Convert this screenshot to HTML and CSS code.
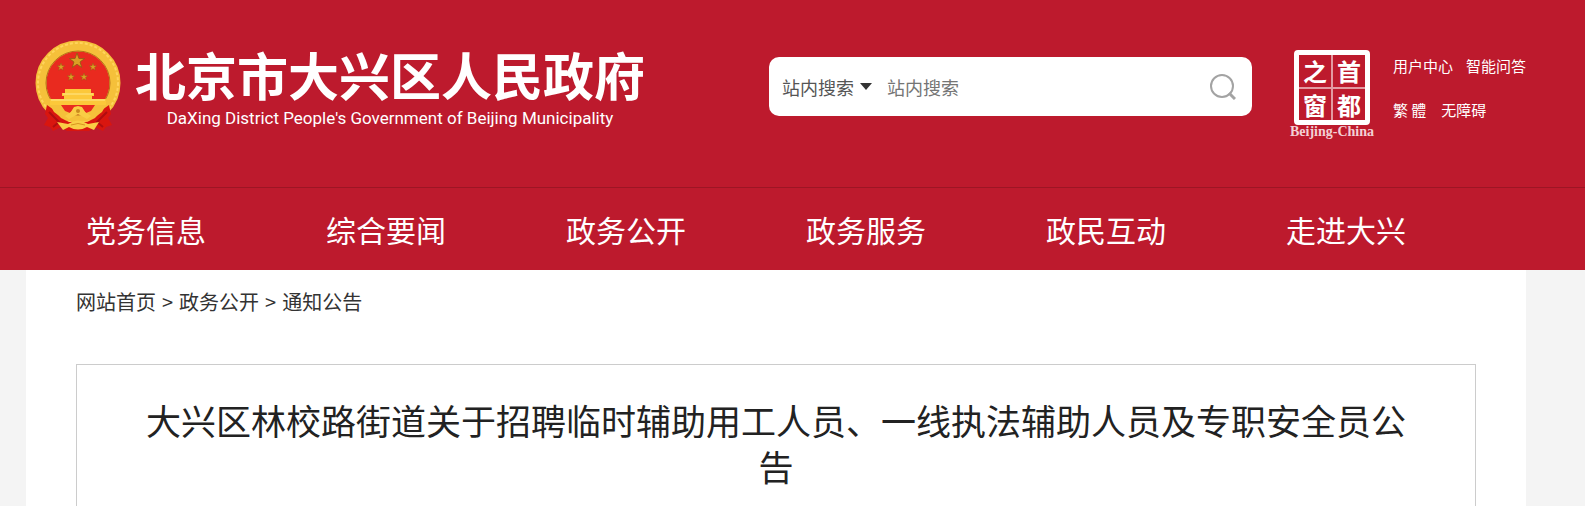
FILE: index.html
```html
<!DOCTYPE html>
<html lang="zh-CN">
<head>
    <meta charset="UTF-8">
    <meta name="viewport" content="width=device-width, initial-scale=1.0">
    <title>大兴区林校路街道关于招聘临时辅助用工人员、一线执法辅助人员及专职安全员公告</title>
    <link rel="stylesheet" href="styles.css">
</head>
<body>

<header class="header">
    <div class="wrap top">
        <a class="logo" href="#">
            <svg class="emblem" viewBox="0 0 86 92" aria-hidden="true">
                <defs>
                    <path id="star" d="M0-10 2.4-3.1 9.5-3.1 3.8 1.2 5.9 8.1 0 4-5.9 8.1-3.8 1.2-9.5-3.1-2.4-3.1z"/>
                </defs>
                <!-- wheat ring -->
                <circle cx="43" cy="43" r="37" fill="#e92a1f" stroke="#f5c03a" stroke-width="11"/>
                <circle cx="43" cy="43" r="40" fill="none" stroke="#ffd45c" stroke-width="2" stroke-dasharray="3 2"/>
                <circle cx="43" cy="43" r="32" fill="none" stroke="#b4701a" stroke-width="1"/>
                <!-- ribbons -->
                <path d="M12 65 19 70 26 78 34 82H52L60 78 67 70 74 65 76 74 73 78 77 85 71 87 68 91 60 87 54 91H32L26 87 18 91 15 87 9 85 13 78 10 74z" fill="#d9160f"/>
                <path d="M14 72 24 82 18 87M72 72 62 82 68 87" fill="none" stroke="#b00d10" stroke-width="2"/>
                <path d="M15 65H71L67 72 59 78 50 76 43 70 36 76 27 78 19 72z" fill="#f5c03a"/>
                <path d="M26 65H60L56 71 51 73 47 68H39L35 73 30 71z" fill="#e92a1f"/>
                <path d="M36 72 39 67 43 66 47 67 50 72 56 76 52 79 43 74 34 79 30 76z" fill="#f9cd45"/>
                <circle cx="43" cy="71" r="2" fill="#c98a1e"/>
                <!-- gate -->
                <path d="M30 49H56V53H59V56H57V59H71V65H15V59H29V56H27V53H30z" fill="#fcc83a"/>
                <path d="M28 54H58M16 60H70" stroke="#ffe78a" stroke-width="1"/>
                <path d="M22 82 33 84Q43 77 53 84L64 82 59 90 52 87Q43 92 34 87L28 90z" fill="#f9cd45"/>
                <path d="M36 85Q43 82 50 85" fill="none" stroke="#d9951f" stroke-width="1"/>
                <g fill="#dba024" stroke="#8f5a14" stroke-width="1">
                    <use href="#star" transform="translate(42 21) scale(.8)"/>
                    <use href="#star" transform="translate(26 27) scale(.4)"/>
                    <use href="#star" transform="translate(58 27) scale(.4)"/>
                    <use href="#star" transform="translate(36 37) scale(.4)"/>
                    <use href="#star" transform="translate(49 37) scale(.4)"/>
                </g>
            </svg>
            <span class="logo-text">
                <strong class="logo-cn">北京市大兴区人民政府</strong>
                <span class="logo-en">DaXing District People's Government of Beijing Municipality</span>
            </span>
        </a>

        <form class="search" action="#">
            <select class="search-type" aria-label="搜索范围">
                <option>站内搜索</option>
            </select>
            <svg class="caret" viewBox="0 0 12 7" aria-hidden="true"><path d="M0 0H12L6 7z" fill="#333"/></svg>
            <input class="search-input" type="text" placeholder="站内搜索" aria-label="站内搜索">
            <button class="search-btn" type="submit" aria-label="搜索">
                <svg viewBox="0 0 26 26" aria-hidden="true">
                    <circle cx="12" cy="12" r="11" fill="none" stroke="#a3a3a3" stroke-width="2"/>
                    <path d="M19 19 25 25" stroke="#a3a3a3" stroke-width="3"/>
                </svg>
            </button>
        </form>

        <a class="capital" href="#">
            <span class="seal">
                <span>之</span><span>首</span>
                <span>窗</span><span>都</span>
            </span>
            <span class="capital-en">Beijing-China</span>
        </a>

        <div class="links">
            <div class="links-row"><a href="#">用户中心</a><a href="#">智能问答</a></div>
            <div class="links-row links-row-wide"><a href="#">繁 體</a><a href="#">无障碍</a></div>
        </div>
    </div>

    <nav class="nav">
        <ul class="wrap nav-list">
            <li><a href="#">党务信息</a></li>
            <li><a href="#">综合要闻</a></li>
            <li><a href="#">政务公开</a></li>
            <li><a href="#">政务服务</a></li>
            <li><a href="#">政民互动</a></li>
            <li><a href="#">走进大兴</a></li>
        </ul>
    </nav>
</header>

<main class="wrap content">
    <div class="crumbs">
        <a href="#">网站首页</a><span>&gt;</span><a href="#">政务公开</a><span>&gt;</span><a href="#">通知公告</a>
    </div>
    <article class="article">
        <h1>大兴区林校路街道关于招聘临时辅助用工人员、一线执法辅助人员及专职安全员公告</h1>
    </article>
</main>

</body>
</html>
```
FILE: styles.css
```css
* {
    box-sizing: border-box;
}

html, body {
    height: 100%;
}

body {
    display: flex;
    flex-direction: column;
    margin: 0;
    background-color: #f4f4f4;
    color: #333;
    font-family: "Noto Sans CJK SC", sans-serif;
    overflow: hidden;
}

a {
    color: inherit;
    text-decoration: none;
}

.wrap {
    margin: 0 59px 0 26px;
}

/* Header */
.header {
    flex: none;
    background-color: #bd1a2d;
    color: #fff;
}

.top {
    display: flex;
    align-items: flex-start;
    padding: 40px 0 49px 9px;
}

.logo {
    display: flex;
    flex: none;
    gap: 14px;
}

.emblem {
    width: 86px;
    height: 92px;
}

.logo-text {
    display: flex;
    flex-direction: column;
    align-items: center;
}

.logo-cn {
    font-size: 51px;
    line-height: 68px;
    white-space: nowrap;
}

.logo-en {
    font-family: Roboto, sans-serif;
    font-size: 17px;
    line-height: 20px;
    white-space: nowrap;
}

/* Search */
.search {
    display: flex;
    flex: 1;
    align-items: center;
    height: 59px;
    margin: 17px 38px 0 124px;
    padding: 0 16px 0 13px;
    background-color: #fff;
    border-radius: 10px;
}

.search-type {
    width: 72px;
    padding: 0;
    border: none;
    background: none;
    color: #555;
    font-family: inherit;
    font-size: 18px;
    appearance: none;
}

.caret {
    width: 12px;
    height: 7px;
    margin-left: 6px;
}

.search-input {
    flex: 1;
    min-width: 0;
    margin-left: 15px;
    padding: 0;
    border: none;
    outline: none;
    font-family: inherit;
    font-size: 18px;
}

.search-input::placeholder {
    color: #757575;
}

.search-btn {
    width: 26px;
    height: 26px;
    padding: 0;
    border: none;
    background: none;
    cursor: pointer;
}

.search-btn svg {
    display: block;
}

/* Capital window seal */
.capital {
    display: flex;
    flex: none;
    flex-direction: column;
    align-items: center;
    width: 84px;
    padding-top: 10px;
}

.seal {
    display: grid;
    grid-template-columns: 1fr 1fr;
    grid-template-rows: 1fr 1fr;
    gap: 2px;
    width: 76px;
    height: 75px;
    border: 5px solid #fff;
    border-radius: 4px;
    background: linear-gradient(#e39aa2, #e39aa2) center / 2px 100% no-repeat,
                linear-gradient(#e39aa2, #e39aa2) center / 100% 2px no-repeat;
}

.seal span {
    font-size: 24px;
    font-weight: bold;
    line-height: 32px;
    text-align: center;
}

.capital-en {
    color: #f3d0d4;
    font-family: "Liberation Serif", serif;
    font-size: 14px;
    font-weight: bold;
    line-height: 13px;
    white-space: nowrap;
}

/* Top links */
.links {
    flex: none;
    margin-left: 19px;
    padding-top: 15px;
    font-size: 15px;
    line-height: 22px;
}

.links-row {
    display: flex;
    gap: 13px;
}

.links-row-wide {
    gap: 15px;
    margin-top: 22px;
}

/* Nav */
.nav {
    border-top: 1px solid #9d1524;
}

.nav-list {
    display: flex;
    padding: 0 60px 0 0;
    list-style: none;
}

.nav-list li {
    flex: 1;
    text-align: center;
}

.nav-list a {
    font-size: 30px;
    line-height: 82px;
}

/* Content */
.content {
    display: flex;
    flex: 1 0 auto;
    flex-direction: column;
    padding: 0 50px;
    background-color: #fff;
}

.crumbs {
    display: flex;
    gap: 6px;
    padding: 17px 0 47px;
    font-size: 20px;
    line-height: 30px;
}

.article {
    flex: 1;
    padding: 32px 60px 0;
    border: 1px solid #ccc;
    border-bottom: none;
}

.article h1 {
    margin: 0;
    color: #222;
    font-size: 35px;
    font-weight: normal;
    line-height: 46px;
    text-align: center;
}
```
